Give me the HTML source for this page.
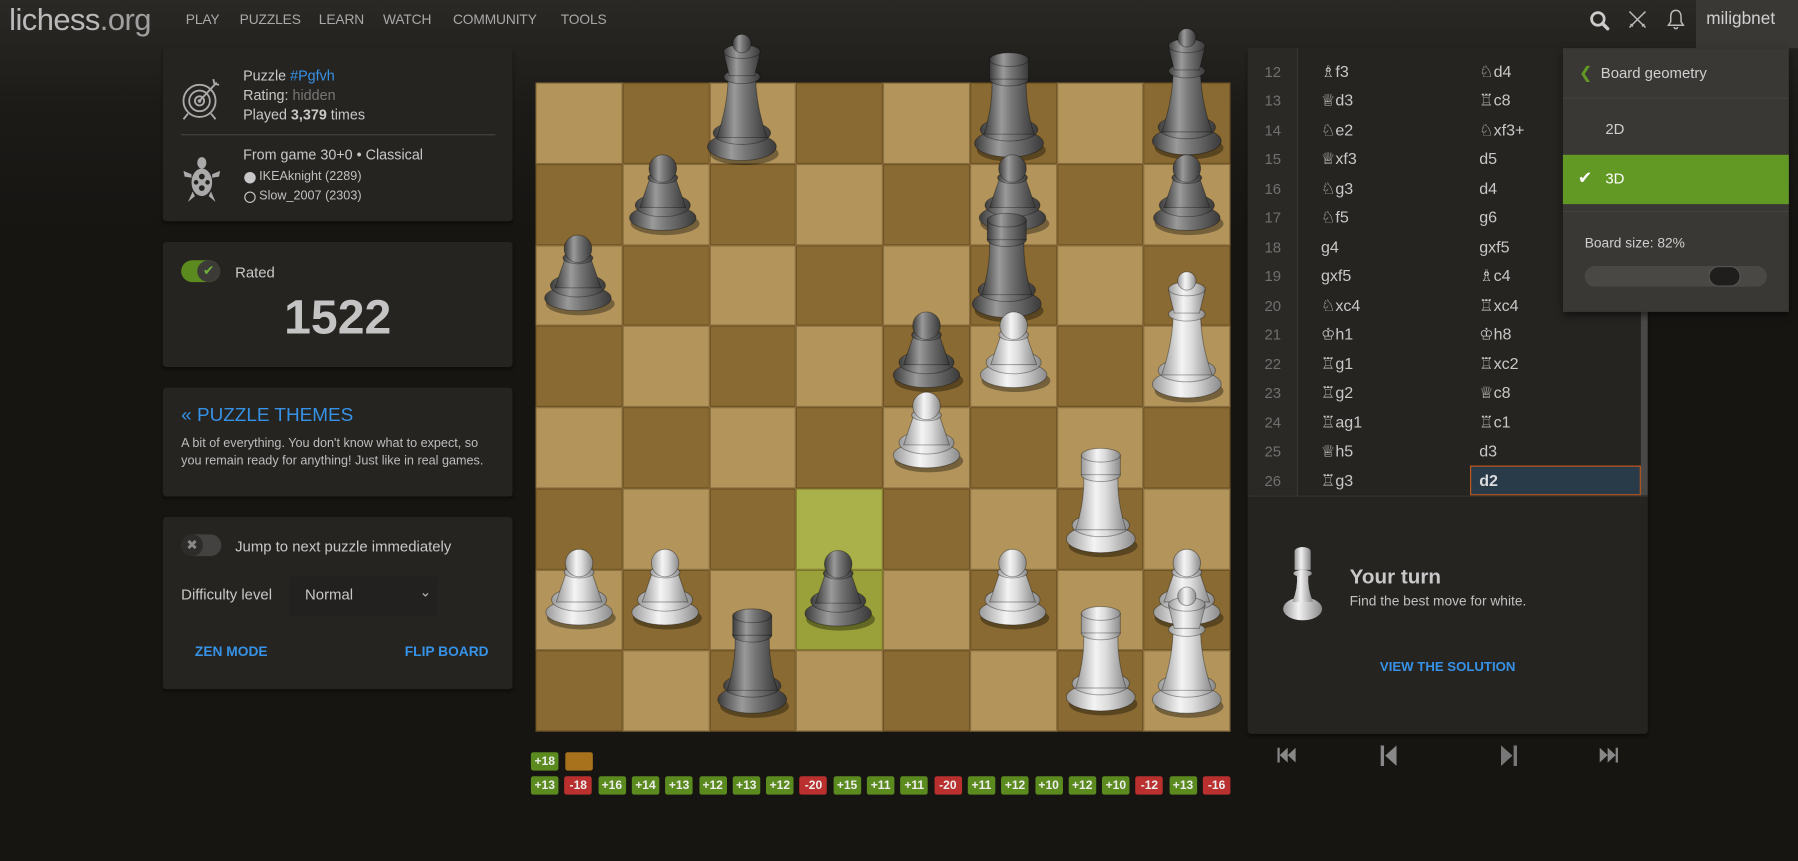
<!DOCTYPE html>
<html><head><meta charset="utf-8">
<style>
*{margin:0;padding:0;box-sizing:border-box}
html,body{width:1798px;height:861px;overflow:hidden;background:#161512}
#w{position:absolute;left:0;top:0;width:1568px;height:751px;transform:scale(1.14668);transform-origin:0 0;font-family:"Liberation Sans","DejaVu Sans",sans-serif;color:#bababa;background:linear-gradient(#2b2925 0,#1d1b18 90px,#161512 200px)}
.a{position:absolute}
.nav{top:10px;font-size:12px;color:#a9a9a9;letter-spacing:-.1px}
.p{position:absolute;background:#262421;border-radius:3px;box-shadow:0 2px 3px rgba(0,0,0,.4)}
.blue{color:#3692e7}
.sq{position:absolute;width:75.75px;height:70.75px}
.mv{position:absolute;font-size:14px;color:#c8c8c8;font-family:"Liberation Sans","DejaVu Sans",sans-serif}
.num{position:absolute;left:0;width:44px;text-align:center;font-size:13px;color:#707070}
.chip{position:absolute;width:24px;height:16px;border-radius:2px;font-size:10.5px;font-weight:bold;color:#eee;text-align:center;line-height:16px}
.g{background:#5b8a1f}.r{background:#b9302f}
</style></head><body><div id="w">
<div class="a" style="left:8px;top:2px;font-size:27px;color:#bababa;letter-spacing:-.5px">lichess<span style="color:#a0a0a0">.org</span></div>
<div class="a nav" style="left:162px">PLAY</div>
<div class="a nav" style="left:209px">PUZZLES</div>
<div class="a nav" style="left:278px">LEARN</div>
<div class="a nav" style="left:334px">WATCH</div>
<div class="a nav" style="left:395px">COMMUNITY</div>
<div class="a nav" style="left:489px">TOOLS</div>
<svg class="a" style="left:1386px;top:9px" width="18" height="18" viewBox="0 0 18 18"><circle cx="7.5" cy="7.5" r="5.5" fill="none" stroke="#ccc" stroke-width="2.4"/><path d="M11.5 11.5L16 16" stroke="#ccc" stroke-width="3" stroke-linecap="round"/></svg>
<svg class="a" style="left:1419px;top:8px" width="18" height="18" viewBox="0 0 18 18"><path d="M2 2L16 16M16 2L2 16M3 13l2 2M15 13l-2 2" stroke="#bbb" stroke-width="1.3"/></svg>
<svg class="a" style="left:1453px;top:7px" width="17" height="19" viewBox="0 0 17 19"><path d="M8.5 2C5 2 4 5 4 8v4l-2 3h13l-2-3V8c0-3-1-6-4.5-6z M7 16.5a1.5 1.5 0 0 0 3 0" fill="none" stroke="#bbb" stroke-width="1.3"/></svg>
<div class="a" style="left:1479px;top:0;width:89px;height:42px;background:#3a3835"></div>
<div class="a" style="left:1488px;top:8px;font-size:15px;color:#d0d0d0">miligbnet</div>

<div class="p" style="left:142px;top:42px;width:305px;height:151px">
 <svg class="a" style="left:16px;top:24px" width="36" height="40" viewBox="0 0 36 40"><g fill="none" stroke="#aaa" stroke-width="1.6"><circle cx="16" cy="22" r="14"/><circle cx="16" cy="22" r="9"/><circle cx="16" cy="22" r="4"/><path d="M16 22L31 6M28 3l1 4 4 1M2 38l4-5M30 38l-4-5"/></g><circle cx="16" cy="22" r="1.6" fill="#aaa"/></svg>
 <div class="a" style="left:70px;top:16px;font-size:12.5px;line-height:17px;color:#c8c8c8">Puzzle <span class="blue">#Pgfvh</span><br>Rating: <span style="color:#777">hidden</span><br>Played <b>3,379</b> times</div>
 <div class="a" style="left:16px;top:75px;width:274px;height:1px;background:#444"></div>
 <svg class="a" style="left:16px;top:94px" width="36" height="42" viewBox="0 0 36 42"><g fill="#aaa"><ellipse cx="18" cy="6" rx="4" ry="5"/><ellipse cx="18" cy="23" rx="9" ry="12"/><path d="M9 16L2 13l1 5 6 1zM27 16l7-3-1 5-6 1zM10 31l-4 9 6-5zM26 31l4 9-6-5z"/></g><g fill="#262421"><circle cx="18" cy="18" r="2.5"/><circle cx="13" cy="23" r="2"/><circle cx="23" cy="23" r="2"/><circle cx="18" cy="28" r="2.5"/></g></svg>
 <div class="a" style="left:70px;top:86px;font-size:12.5px;color:#c8c8c8">From game 30+0 • Classical</div>
 <div class="a" style="left:71px;top:108px;width:10px;height:10px;border-radius:50%;background:#c8c8c8"></div>
 <div class="a" style="left:84px;top:106px;font-size:11px;color:#c0c0c0">IKEAknight (2289)</div>
 <div class="a" style="left:71px;top:125px;width:10px;height:10px;border-radius:50%;border:1.5px solid #c8c8c8"></div>
 <div class="a" style="left:84px;top:123px;font-size:11px;color:#c0c0c0">Slow_2007 (2303)</div>
</div>
<div class="p" style="left:142px;top:211px;width:305px;height:109px">
 <div class="a" style="left:16px;top:16px;width:34px;height:19px;border-radius:10px;background:#5b8a1f"></div>
 <div class="a" style="left:30px;top:16px;width:20px;height:19px;border-radius:50%;background:#3d3b38;color:#6fb03a;font-size:12px;text-align:center;line-height:19px">✔</div>
 <div class="a" style="left:63px;top:19px;font-size:13px;color:#c8c8c8">Rated</div>
 <div class="a" style="left:0;top:42px;width:305px;text-align:center;font-size:42px;font-weight:bold;color:#c4c4c4">1522</div>
</div>
<div class="p" style="left:142px;top:338px;width:305px;height:95px">
 <div class="a blue" style="left:16px;top:15px;font-size:16.5px">« PUZZLE THEMES</div>
 <div class="a" style="left:16px;top:42px;font-size:11px;line-height:15px;color:#bdbdbd">A bit of everything. You don't know what to expect, so<br>you remain ready for anything! Just like in real games.</div>
</div>
<div class="p" style="left:142px;top:451px;width:305px;height:150px">
 <div class="a" style="left:16px;top:15px;width:35px;height:19px;border-radius:10px;background:#444240"></div>
 <div class="a" style="left:16px;top:15px;width:19px;height:19px;border-radius:50%;background:#2e2c2a;color:#888;font-size:12px;text-align:center;line-height:19px">✖</div>
 <div class="a" style="left:63px;top:18px;font-size:13px;color:#c8c8c8">Jump to next puzzle immediately</div>
 <div class="a" style="left:16px;top:60px;font-size:13px;color:#c8c8c8">Difficulty level</div>
 <div class="a" style="left:110px;top:52px;width:130px;height:34px;background:#232120"></div>
 <div class="a" style="left:124px;top:60px;font-size:13px;color:#c8c8c8">Normal</div>
 <div class="a" style="left:224px;top:58px;font-size:12px;color:#bbb">⌄</div>
 <div class="a blue" style="left:28px;top:110px;font-size:12px;font-weight:bold">ZEN MODE</div>
 <div class="a blue" style="left:211px;top:110px;font-size:12px;font-weight:bold">FLIP BOARD</div>
</div>

<div class="a" id="board" style="left:467px;top:72px;width:606px;height:566px;background:#8e6e36"></div>

<div class="p" style="left:1088px;top:42px;width:349px;height:390px;overflow:hidden;border-radius:0">
 <div class="a" style="left:0;top:0;width:44px;height:390px;background:#2b2926;border-right:1px solid #3a3835"></div>
 <div class="a" style="left:194px;top:364px;width:149px;height:26px;background:#293a49;border:1px solid #c75a1a"></div>
 <div class="a" style="left:343px;top:228px;width:6px;height:162px;background:#4a4846"></div>
 <div id="mv"></div>
</div>
<div class="p" style="left:1088px;top:432px;width:349px;height:208px;border-top:1px solid #3a3835;border-radius:0 0 3px 3px">
 <svg class="a" style="left:30px;top:42px" width="36" height="66" viewBox="0 0 36 66"><defs><linearGradient id="wt" x1="0" x2="1"><stop offset="0" stop-color="#999"/><stop offset=".4" stop-color="#f2f2f2"/><stop offset="1" stop-color="#888"/></linearGradient></defs><g fill="url(#wt)"><ellipse cx="18" cy="56" rx="17" ry="10"/><path d="M9 50Q14 38 13 26h10q-1 12 4 24z"/><ellipse cx="18" cy="25" rx="8" ry="3"/><path d="M11 6h14v16H11z"/><ellipse cx="18" cy="6" rx="7" ry="4"/></g></svg>
 <div class="a" style="left:89px;top:60px;font-size:18px;font-weight:bold;color:#c8c8c8">Your turn</div>
 <div class="a" style="left:89px;top:84px;font-size:12px;color:#c0c0c0">Find the best move for white.</div>
 <div class="a blue" style="left:0;top:143px;width:349px;text-align:center;font-size:11.5px;font-weight:bold">VIEW THE SOLUTION</div>
</div>
<svg class="a" style="left:1204px;top:650px" width="14" height="18"><path d="M0 0h3v18H0zM14 0v18L4 9z" fill="#888"/></svg>
<svg class="a" style="left:1309px;top:650px" width="14" height="18"><path d="M11 0h3v18h-3zM0 0v18L10 9z" fill="#777"/></svg>
<svg class="a" style="left:1395px;top:652px" width="16" height="13"><path d="M0 0v13L7 6.5zM7 0v13l7-6.5zM14 0h2v13h-2z" fill="#888"/></svg>
<svg class="a" style="left:1114px;top:652px" width="16" height="13"><path d="M0 0h2v13H0zM16 0v13L9 6.5zM9 0v13L2 6.5z" fill="#888"/></svg>

<div class="a" style="left:1363px;top:42px;width:197px;height:230px;background:#3a3835;box-shadow:0 3px 6px rgba(0,0,0,.5)">
 <div class="a" style="left:14px;top:13px;font-size:14px;color:#629924;font-weight:bold">❮</div>
 <div class="a" style="left:33px;top:14px;font-size:13px;color:#cfcfcf">Board geometry</div>
 <div class="a" style="left:0;top:43px;width:197px;height:1px;background:#44423f"></div>
 <div class="a" style="left:37px;top:63px;font-size:13px;color:#cfcfcf">2D</div>
 <div class="a" style="left:0;top:93px;width:197px;height:43px;background:#629924"></div>
 <div class="a" style="left:13px;top:104px;font-size:15px;color:#fff">✔</div>
 <div class="a" style="left:37px;top:106px;font-size:13px;color:#fff">3D</div>
 <div class="a" style="left:0;top:142px;width:197px;height:1px;background:#44423f"></div>
 <div class="a" style="left:19px;top:163px;font-size:12px;color:#cfcfcf">Board size: 82%</div>
 <div class="a" style="left:19px;top:190px;width:159px;height:18px;border-radius:9px;background:#4a4845"></div>
 <div class="a" style="left:127px;top:190px;width:28px;height:18px;border-radius:9px;background:#1f1e1c;border:1px solid #555"></div>
</div>

<div id="chips"></div>
</div>
<script>
var b=document.getElementById('board'),h='';
for(var r=0;r<8;r++)for(var c=0;c<8;c++){var L=(r+c)%2==0;var col=L?'#b3955c':'#8a6a33';
if(c==3&&(r==5||r==6))col=L?'#aab04a':'#9aa03a';
h+='<div class="sq" style="left:'+(c*75.75)+'px;top:'+(r*70.75)+'px;background:'+col+';box-shadow:inset 0 0 0 1px rgba(60,40,10,.35)"></div>';}
var P={pawn:'<ellipse cx="30" cy="57" rx="29" ry="11"/><ellipse cx="30" cy="46" rx="24" ry="10"/><path d="M10 48Q16 30 19 22h22q3 8 9 26z"/><ellipse cx="30" cy="22" rx="13" ry="5"/><circle cx="30" cy="14" r="12"/>',
rook:'<ellipse cx="30" cy="80" rx="30" ry="12"/><ellipse cx="30" cy="68" rx="25" ry="10"/><path d="M8 72Q16 48 15 24h30q-1 24 7 48z"/><ellipse cx="30" cy="24" rx="17" ry="6"/><path d="M13 7h34v17H13z"/><ellipse cx="30" cy="7" rx="17" ry="6"/>',
king:'<ellipse cx="30" cy="98" rx="30" ry="12"/><ellipse cx="30" cy="86" rx="25" ry="10"/><path d="M8 90Q18 62 18 36h24q0 26 10 54z"/><ellipse cx="30" cy="37" rx="16" ry="6"/><path d="M14 16h32l-5 20H19z"/><ellipse cx="30" cy="15" rx="16" ry="6"/><circle cx="30" cy="8" r="8"/>'};
var H={pawn:68,rook:92,king:110};
var list=[['king','b',647,30],['rook','b',880,45],['king','b',1035,25],['pawn','b',578,133],['pawn','b',883,133],['pawn','b',1035,133],['pawn','b',504,203],['rook','b',878,185],['pawn','b',808,270],['pawn','b',731,478],['rook','b',656,530],
['pawn','w',884,270],['king','w',1035,237],['pawn','w',808,340],['rook','w',960,390],['pawn','w',505,477],['pawn','w',580,477],['pawn','w',883,477],['pawn','w',1035,477],['rook','w',960,528],['king','w',1035,512]];
var s='<svg class="a" style="left:0;top:0" width="1568" height="751"><defs><linearGradient id="gb" x1="0" x2="1"><stop offset="0" stop-color="#3c3c3c"/><stop offset=".35" stop-color="#9a9a9a"/><stop offset=".55" stop-color="#777"/><stop offset="1" stop-color="#3a3a3a"/></linearGradient><linearGradient id="gw" x1="0" x2="1"><stop offset="0" stop-color="#9a9a9a"/><stop offset=".4" stop-color="#f4f4f4"/><stop offset=".6" stop-color="#dcdcdc"/><stop offset="1" stop-color="#8a8a8a"/></linearGradient></defs>';
list.forEach(function(p){var hh=H[p[0]];
s+='<g transform="translate('+(p[2]-30)+','+p[3]+')" fill="url(#g'+p[1]+')" stroke="rgba(0,0,0,.35)" stroke-width=".8"><ellipse cx="32" cy="'+(hh-6)+'" rx="30" ry="10" fill="rgba(0,0,0,.35)" stroke="none"/>'+P[p[0]]+'</g>';});
s+='</svg>';
b.insertAdjacentHTML('afterend',s);
b.innerHTML=h;
var mv=[[11,'♗xf6','♗xf6'],[12,'♗f3','♘d4'],[13,'♕d3','♖c8'],[14,'♘e2','♘xf3+'],[15,'♕xf3','d5'],[16,'♘g3','d4'],[17,'♘f5','g6'],[18,'g4','gxf5'],[19,'gxf5','♗c4'],[20,'♘xc4','♖xc4'],[21,'♔h1','♔h8'],[22,'♖g1','♖xc2'],[23,'♖g2','♕c8'],[24,'♖ag1','♖c1'],[25,'♕h5','d3'],[26,'♖g3','d2']];
var m='';mv.forEach(function(x,i){var t=-17+i*25.5;
m+='<div class="num" style="top:'+(t+4)+'px">'+x[0]+'</div><div class="mv" style="left:64px;top:'+(t+3)+'px">'+x[1]+'</div><div class="mv" style="left:202px;top:'+(t+3)+'px'+(x[0]==26?';font-weight:bold;color:#ddd':'')+'">'+x[2]+'</div>';});
document.getElementById('mv').innerHTML=m;
var c='<div class="chip g" style="left:463px;top:656px">+18</div><div class="chip" style="left:493px;top:656px;background:#a8721c"></div>';
['+13','-18','+16','+14','+13','+12','+13','+12','-20','+15','+11','+11','-20','+11','+12','+10','+12','+10','-12','+13','-16'].forEach(function(v,i){c+='<div class="chip '+(v[0]=='-'?'r':'g')+'" style="left:'+(463+i*29.3)+'px;top:677px">'+v+'</div>';});
document.getElementById('chips').innerHTML=c;
</script>
</body></html>
